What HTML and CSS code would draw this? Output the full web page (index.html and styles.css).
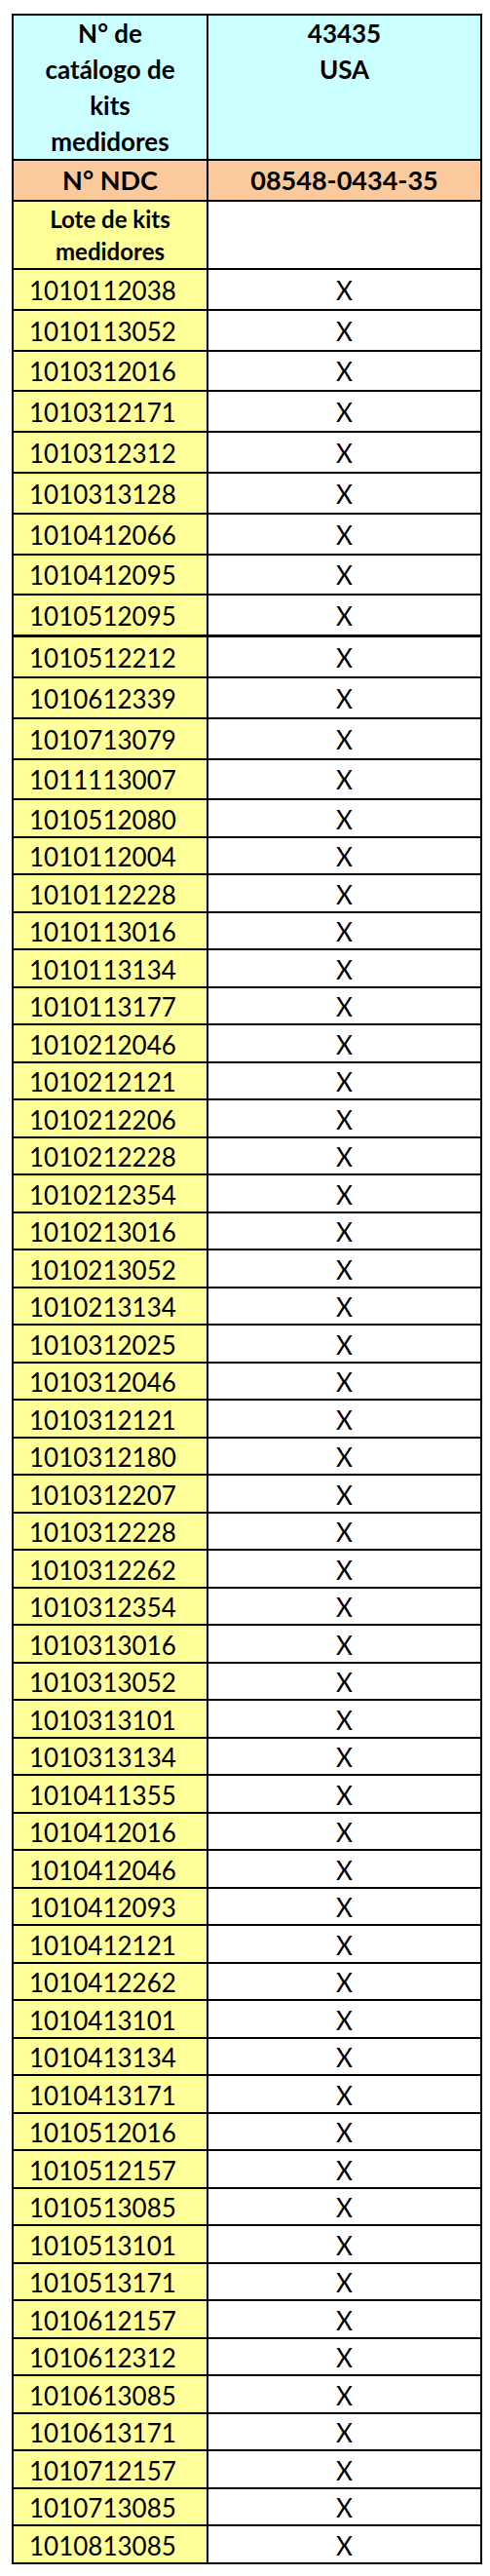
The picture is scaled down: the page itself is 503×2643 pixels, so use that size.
FILE: index.html
```html
<!DOCTYPE html>
<html lang="es">
<head>
<meta charset="utf-8">
<title>Lotes de kits medidores</title>
<link rel="stylesheet" href="styles.css">
</head>
<body>
<div class="sheet">
  <div class="row head">
    <div class="cell cyan h-left">N° de<br>catálogo de<br>kits<br>medidores</div>
    <div class="cell cyan h-right">43435<br>USA</div>
  </div>
  <div class="row ndc">
    <div class="cell orange">N° NDC</div>
    <div class="cell orange">08548-0434-35</div>
  </div>
  <div class="row lote">
    <div class="cell yellow lote-label">Lote de kits<br>medidores</div>
    <div class="cell white"></div>
  </div>
  <div class="row tall"><div class="cell yellow lot">1010112038</div><div class="cell white mark">X</div></div>
  <div class="row tall"><div class="cell yellow lot">1010113052</div><div class="cell white mark">X</div></div>
  <div class="row tall"><div class="cell yellow lot">1010312016</div><div class="cell white mark">X</div></div>
  <div class="row tall"><div class="cell yellow lot">1010312171</div><div class="cell white mark">X</div></div>
  <div class="row tall"><div class="cell yellow lot">1010312312</div><div class="cell white mark">X</div></div>
  <div class="row tall"><div class="cell yellow lot">1010313128</div><div class="cell white mark">X</div></div>
  <div class="row tall"><div class="cell yellow lot">1010412066</div><div class="cell white mark">X</div></div>
  <div class="row tall"><div class="cell yellow lot">1010412095</div><div class="cell white mark">X</div></div>
  <div class="row tall"><div class="cell yellow lot">1010512095</div><div class="cell white mark">X</div></div>
  <div class="row tall break"><div class="cell yellow lot">1010512212</div><div class="cell white mark">X</div></div>
  <div class="row tall"><div class="cell yellow lot">1010612339</div><div class="cell white mark">X</div></div>
  <div class="row tall"><div class="cell yellow lot">1010713079</div><div class="cell white mark">X</div></div>
  <div class="row tall"><div class="cell yellow lot">1011113007</div><div class="cell white mark">X</div></div>
  <div class="row"><div class="cell yellow lot">1010512080</div><div class="cell white mark">X</div></div>
  <div class="row"><div class="cell yellow lot">1010112004</div><div class="cell white mark">X</div></div>
  <div class="row"><div class="cell yellow lot">1010112228</div><div class="cell white mark">X</div></div>
  <div class="row"><div class="cell yellow lot">1010113016</div><div class="cell white mark">X</div></div>
  <div class="row"><div class="cell yellow lot">1010113134</div><div class="cell white mark">X</div></div>
  <div class="row"><div class="cell yellow lot">1010113177</div><div class="cell white mark">X</div></div>
  <div class="row"><div class="cell yellow lot">1010212046</div><div class="cell white mark">X</div></div>
  <div class="row"><div class="cell yellow lot">1010212121</div><div class="cell white mark">X</div></div>
  <div class="row"><div class="cell yellow lot">1010212206</div><div class="cell white mark">X</div></div>
  <div class="row"><div class="cell yellow lot">1010212228</div><div class="cell white mark">X</div></div>
  <div class="row"><div class="cell yellow lot">1010212354</div><div class="cell white mark">X</div></div>
  <div class="row"><div class="cell yellow lot">1010213016</div><div class="cell white mark">X</div></div>
  <div class="row"><div class="cell yellow lot">1010213052</div><div class="cell white mark">X</div></div>
  <div class="row"><div class="cell yellow lot">1010213134</div><div class="cell white mark">X</div></div>
  <div class="row"><div class="cell yellow lot">1010312025</div><div class="cell white mark">X</div></div>
  <div class="row"><div class="cell yellow lot">1010312046</div><div class="cell white mark">X</div></div>
  <div class="row"><div class="cell yellow lot">1010312121</div><div class="cell white mark">X</div></div>
  <div class="row"><div class="cell yellow lot">1010312180</div><div class="cell white mark">X</div></div>
  <div class="row"><div class="cell yellow lot">1010312207</div><div class="cell white mark">X</div></div>
  <div class="row"><div class="cell yellow lot">1010312228</div><div class="cell white mark">X</div></div>
  <div class="row"><div class="cell yellow lot">1010312262</div><div class="cell white mark">X</div></div>
  <div class="row"><div class="cell yellow lot">1010312354</div><div class="cell white mark">X</div></div>
  <div class="row"><div class="cell yellow lot">1010313016</div><div class="cell white mark">X</div></div>
  <div class="row"><div class="cell yellow lot">1010313052</div><div class="cell white mark">X</div></div>
  <div class="row"><div class="cell yellow lot">1010313101</div><div class="cell white mark">X</div></div>
  <div class="row"><div class="cell yellow lot">1010313134</div><div class="cell white mark">X</div></div>
  <div class="row"><div class="cell yellow lot">1010411355</div><div class="cell white mark">X</div></div>
  <div class="row"><div class="cell yellow lot">1010412016</div><div class="cell white mark">X</div></div>
  <div class="row"><div class="cell yellow lot">1010412046</div><div class="cell white mark">X</div></div>
  <div class="row"><div class="cell yellow lot">1010412093</div><div class="cell white mark">X</div></div>
  <div class="row"><div class="cell yellow lot">1010412121</div><div class="cell white mark">X</div></div>
  <div class="row"><div class="cell yellow lot">1010412262</div><div class="cell white mark">X</div></div>
  <div class="row"><div class="cell yellow lot">1010413101</div><div class="cell white mark">X</div></div>
  <div class="row"><div class="cell yellow lot">1010413134</div><div class="cell white mark">X</div></div>
  <div class="row"><div class="cell yellow lot">1010413171</div><div class="cell white mark">X</div></div>
  <div class="row"><div class="cell yellow lot">1010512016</div><div class="cell white mark">X</div></div>
  <div class="row"><div class="cell yellow lot">1010512157</div><div class="cell white mark">X</div></div>
  <div class="row"><div class="cell yellow lot">1010513085</div><div class="cell white mark">X</div></div>
  <div class="row"><div class="cell yellow lot">1010513101</div><div class="cell white mark">X</div></div>
  <div class="row"><div class="cell yellow lot">1010513171</div><div class="cell white mark">X</div></div>
  <div class="row"><div class="cell yellow lot">1010612157</div><div class="cell white mark">X</div></div>
  <div class="row"><div class="cell yellow lot">1010612312</div><div class="cell white mark">X</div></div>
  <div class="row"><div class="cell yellow lot">1010613085</div><div class="cell white mark">X</div></div>
  <div class="row"><div class="cell yellow lot">1010613171</div><div class="cell white mark">X</div></div>
  <div class="row"><div class="cell yellow lot">1010712157</div><div class="cell white mark">X</div></div>
  <div class="row"><div class="cell yellow lot">1010713085</div><div class="cell white mark">X</div></div>
  <div class="row"><div class="cell yellow lot">1010813085</div><div class="cell white mark">X</div></div>
</div>
</body>
</html>
```

FILE: styles.css
```css
html, body {
  margin: 0;
  padding: 0;
  background: #ffffff;
}

body {
  font-family: Lato, "Open Sans", "Liberation Sans", sans-serif;
  color: #000000;
}

.sheet {
  box-sizing: border-box;
  width: 483px;
  margin: 14px 0 0 12px;
  padding: 2px;
  background: #000000;
  display: flex;
  flex-direction: column;
  gap: 2px;
}

.row {
  display: grid;
  grid-template-columns: 198px 1fr;
  column-gap: 2px;
  height: 36.5px;
}

.row.tall {
  height: 39.8px;
}

.row.break {
  margin-top: 1px;
}

.row.head {
  height: 147px;
}

.row.ndc {
  height: 40px;
}

.row.lote {
  height: 68px;
}

.cell {
  display: flex;
  align-items: center;
  justify-content: center;
  text-align: center;
  overflow: hidden;
}

.cyan { background: #ccffff; }
.orange { background: #fbca9c; }
.yellow { background: #ffff99; }
.white { background: #ffffff; }

.h-left, .h-right {
  align-items: flex-start;
  font-weight: 700;
  font-size: 26px;
  line-height: 37px;
}

.ndc .cell {
  font-weight: 700;
  font-size: 27px;
  line-height: 40px;
}

.lote-label {
  font-weight: 700;
  font-size: 24px;
  line-height: 33px;
}

.lot {
  justify-content: flex-start;
  padding-left: 16px;
  font-size: 26px;
  padding-top: 2px;
}

.mark {
  font-size: 26px;
  padding-top: 2px;
}
```
